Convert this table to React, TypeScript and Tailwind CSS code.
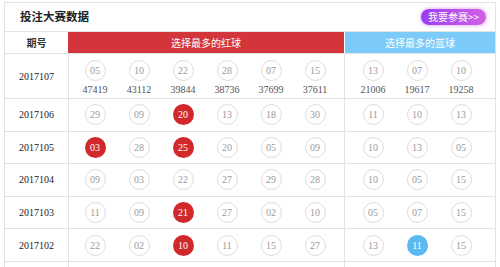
type Ball = { n: string; hit?: boolean };

interface DrawRow {
  issue: string;
  red: Ball[];
  blue: Ball[];
}

const counts = {
  red: ["47419", "43112", "39844", "38736", "37699", "37611"],
  blue: ["21006", "19617", "19258"],
};

const parse = (s: string): Ball[] =>
  s.split(" ").map((t) => (t.startsWith("*") ? { n: t.slice(1), hit: true } : { n: t }));

const rows: DrawRow[] = [
  { issue: "2017107", red: parse("05 10 22 28 07 15"), blue: parse("13 07 10") },
  { issue: "2017106", red: parse("29 09 *20 13 18 30"), blue: parse("11 10 13") },
  { issue: "2017105", red: parse("*03 28 *25 20 05 09"), blue: parse("10 13 05") },
  { issue: "2017104", red: parse("09 03 22 27 29 28"), blue: parse("10 05 15") },
  { issue: "2017103", red: parse("11 09 *21 27 02 10"), blue: parse("05 07 15") },
  { issue: "2017102", red: parse("22 02 *10 11 15 27"), blue: parse("13 *11 15") },
];

const num = "font-['Liberation_Serif',serif]";

function Circle({ ball, color }: { ball: Ball; color: "red" | "blue" }) {
  if (ball.hit) {
    return (
      <div
        className={`flex h-[21px] w-[21px] items-center justify-center rounded-full text-[10px] text-white ${num} ${
          color === "red" ? "bg-[#d1282c]" : "bg-[#5bb8f1]"
        }`}
      >
        {ball.n}
      </div>
    );
  }
  return (
    <div
      className={`flex h-[21px] w-[21px] items-center justify-center rounded-full border border-[#dcdcdc] bg-white text-[10px] text-[#9a9a9a] ${num}`}
    >
      {ball.n}
    </div>
  );
}

function BallSlot({ ball, color, count }: { ball: Ball; color: "red" | "blue"; count?: string }) {
  return (
    <div className="flex w-[44px] flex-col items-center">
      <Circle ball={ball} color={color} />
      {count && <span className={`mt-[3px] text-[10px] leading-[12px] text-[#555] ${num}`}>{count}</span>}
    </div>
  );
}

export default function App() {
  return (
    <div className="h-[267px] w-[500px] overflow-hidden bg-white font-['Noto_Sans_CJK_SC',sans-serif]">
      <div className="ml-[4px] mt-[2px] w-[492px] border border-[#e2e2e2]">
        {/* Title */}
        <div className="flex h-[29px] items-center justify-between border-b border-[#e2e2e2] pl-[15px] pr-[9px]">
          <h3 className="text-[11.5px] font-bold text-[#222]">投注大赛数据</h3>
          <button className="flex h-[16px] w-[65px] items-center justify-center rounded-full bg-gradient-to-r from-[#9a3cf2] to-[#d45fe4] text-[10px] leading-none text-white shadow-[0_0_4px_rgba(190,80,240,0.6)]">
            我要参赛&gt;&gt;
          </button>
        </div>

        {/* Column headers */}
        <div className="flex h-[22px] border-b border-[#e2e2e2] text-[10px]">
          <div className="flex w-[63px] items-center justify-center font-bold text-[#333]">期号</div>
          <div className="flex w-[276px] items-center justify-center bg-[#d2363a] text-white">选择最多的红球</div>
          <div className="ml-px flex flex-1 items-center justify-center bg-[#7ccaf8] text-white">选择最多的蓝球</div>
        </div>

        {/* Draw rows */}
        {rows.map((row, i) => (
          <div
            key={row.issue}
            className={`flex border-b border-[#e2e2e2] ${i === 0 ? "h-[45px]" : "h-[32.6px]"}`}
          >
            <div className={`flex w-[64px] items-center justify-center border-r border-[#e2e2e2] text-[10px] text-[#222] ${num}`}>
              {row.issue}
            </div>
            <div
              className={`flex w-[276px] border-r border-[#e2e2e2] pl-[4px] ${
                i === 0 ? "items-start pt-[6px]" : "items-center"
              }`}
            >
              {row.red.map((b, j) => (
                <BallSlot key={j} ball={b} color="red" count={i === 0 ? counts.red[j] : undefined} />
              ))}
            </div>
            <div className={`flex flex-1 pl-[6px] ${i === 0 ? "items-start pt-[6px]" : "items-center"}`}>
              {row.blue.map((b, j) => (
                <BallSlot key={j} ball={b} color="blue" count={i === 0 ? counts.blue[j] : undefined} />
              ))}
            </div>
          </div>
        ))}

        {/* next row, cut by the viewport */}
        <div className="flex h-[32px]">
          <div className="w-[64px] border-r border-[#e2e2e2]" />
          <div className="w-[276px] border-r border-[#e2e2e2]" />
          <div className="flex-1" />
        </div>
      </div>
    </div>
  );
}
